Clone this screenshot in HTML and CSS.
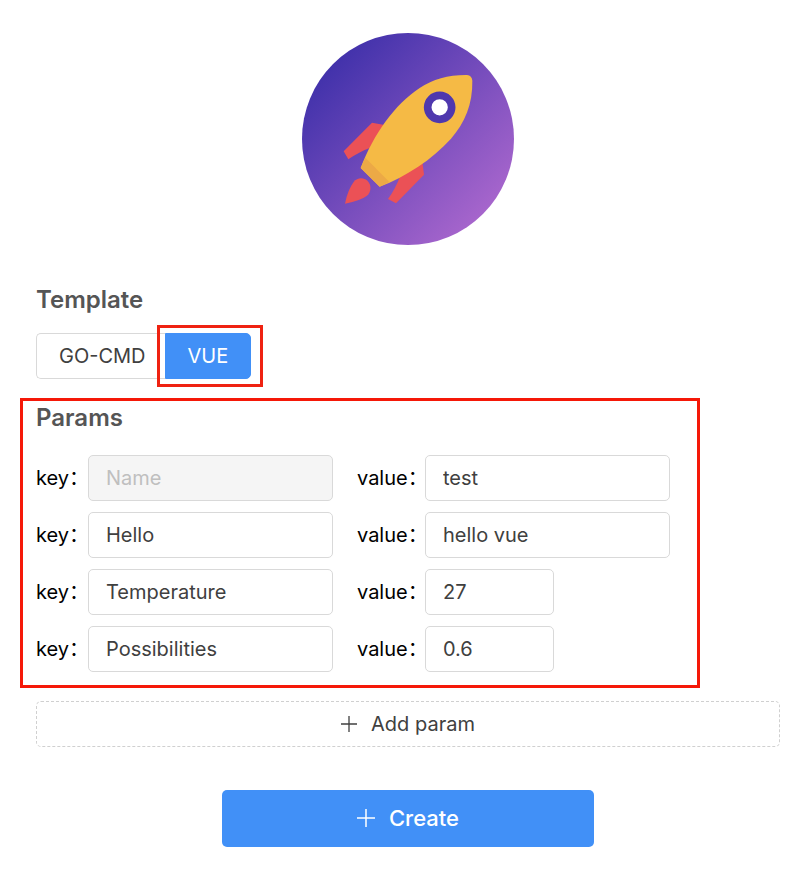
FILE: index.html
```html
<!DOCTYPE html>
<html lang="en">
<head>
<meta charset="utf-8">
<title>Create project</title>
<meta name="viewport" content="width=device-width, initial-scale=1">
<link rel="stylesheet" href="styles.css">
</head>
<body>
<main class="page">
  <svg class="logo" viewBox="23 23 636 636" role="img" aria-label="Rocket">
    <defs>
      <linearGradient id="sky" x1="0.12" y1="0.17" x2="0.84" y2="0.87">
        <stop offset="0" stop-color="#4232ab"/>
        <stop offset="1" stop-color="#a665cc"/>
      </linearGradient>
    </defs>
    <circle cx="341" cy="341" r="318" fill="url(#sky)"/>
    <path fill="#eb5156" d="M233 292L275 300L232 366Q198 378 162 402L148 378Z"/>
    <path fill="#eb5156" d="M384 408L389 448L305 534L281 521Q304 489 318 451Z"/>
    <path fill="#eb5156" d="M152 535Q160 494 178 470C188 457 208 455 220 467C232 480 231 500 218 511Q200 525 152 535Z"/>
    <path fill="#f5ba45" d="M199 428C238 326 302 236 376 188Q436 148 518 149Q533 151 534 166C535 236 512 292 470 340C414 402 335 454 256 484Z"/>
    <path fill="#eca946" d="M199 428L213 397L285 470L256 484Z"/>
    <circle cx="436" cy="246" r="36" fill="#fff" stroke="#4f38ae" stroke-width="23"/>
  </svg>

  <form class="form">
    <fieldset class="template">
      <legend class="heading">Template</legend>
      <div class="segments">
        <label class="segment"><input type="radio" name="template" value="go-cmd"><span>GO-CMD</span></label>
        <label class="segment marked"><input type="radio" name="template" value="vue" checked><span>VUE</span></label>
      </div>
    </fieldset>

    <section class="params">
      <h2 class="heading">Params</h2>
      <div class="rows">
        <div class="row">
          <label for="key1">key：</label><input class="field" id="key1" type="text" placeholder="Name" disabled>
          <label class="second" for="value1">value：</label><input class="field" id="value1" type="text" value="test">
        </div>
        <div class="row">
          <label for="key2">key：</label><input class="field" id="key2" type="text" value="Hello">
          <label class="second" for="value2">value：</label><input class="field" id="value2" type="text" value="hello vue">
        </div>
        <div class="row">
          <label for="key3">key：</label><input class="field" id="key3" type="text" value="Temperature">
          <label class="second" for="value3">value：</label><input class="field short" id="value3" type="text" inputmode="decimal" value="27">
        </div>
        <div class="row">
          <label for="key4">key：</label><input class="field" id="key4" type="text" value="Possibilities">
          <label class="second" for="value4">value：</label><input class="field short" id="value4" type="text" inputmode="decimal" value="0.6">
        </div>
      </div>
    </section>

    <button class="button add" type="button">
      <svg class="plus" viewBox="0 0 16 16" aria-hidden="true"><path d="M8 0V16M0 8H16"/></svg>
      Add param
    </button>
    <button class="button create" type="submit">
      <svg class="plus" viewBox="0 0 18 18" aria-hidden="true"><path d="M9 0V18M0 9H18"/></svg>
      Create
    </button>
  </form>
</main>
</body>
</html>
```

FILE: styles.css
```css
* {
  box-sizing: border-box;
}

body {
  margin: 0;
  background: #fff;
  color: #000;
  font-family: Inter, "Noto Sans CJK SC", sans-serif;
  font-size: 20px;
  line-height: 28px;
}

.page {
  padding: 33px 20px 48px 36px;
}

.logo {
  display: block;
  width: 212px;
  margin: 0 auto 41px;
}

.form {
  display: flex;
  flex-direction: column;
}

.template {
  margin: 0 0 19px;
  padding: 0;
  border: 0;
}

.heading {
  margin: 0;
  padding: 0;
  color: #555;
  font-size: 24px;
  font-weight: 600;
  line-height: 28px;
}

.segments {
  display: flex;
  margin-top: 19px;
}

.segment {
  position: relative;
  display: flex;
  align-items: center;
  justify-content: center;
  height: 46px;
  padding: 0 19px 0 22px;
  border: 1px solid #d9d9d9;
  border-right: 0;
  border-radius: 5px 0 0 5px;
  color: #404040;
}

.segment input {
  position: absolute;
  inset: 0;
  margin: 0;
  opacity: 0;
}

.segment + .segment {
  padding: 0 22px;
  border: 1px solid #4190f7;
  border-radius: 0 5px 5px 0;
}

.segment:has(:checked) {
  background: #4190f7;
  color: #fff;
}

.marked::after {
  content: "";
  position: absolute;
  inset: -9px -13px -9px -9px;
  border: 3px solid #ef2211;
  pointer-events: none;
}

.params {
  max-width: 680px;
  margin-left: -16px;
  padding: 3px 26px 13px 13px;
  border: 3px solid #f51808;
}

.rows {
  display: grid;
  gap: 11px;
  margin-top: 23px;
}

.row {
  display: grid;
  grid-template-columns: 52px minmax(0, 245px) 92px minmax(0, 245px);
  align-items: center;
}

.row label {
  white-space: nowrap;
}

.second {
  padding-left: 24px;
}

.field {
  width: 100%;
  height: 46px;
  padding: 0 17px;
  border: 1px solid #d9d9d9;
  border-radius: 5px;
  background: #fff;
  color: #404040;
  font: inherit;
}

.field:disabled {
  background: #f5f5f5;
}

.field::placeholder {
  color: #bfbfbf;
}

.short {
  width: 129px;
}

.button {
  display: flex;
  align-items: center;
  justify-content: center;
  gap: 14px;
  padding: 0;
  border-radius: 5px;
  font: inherit;
}

.add {
  height: 46px;
  margin-top: 13px;
  border: 1px dashed #d0d0d0;
  background: #fff;
  color: #404040;
}

.create {
  align-self: center;
  width: 50%;
  height: 57px;
  margin-top: 43px;
  padding-bottom: 2px;
  border: 0;
  background: #4190f7;
  color: #fff;
  font-size: 22px;
  font-weight: 500;
}

.plus {
  width: 16px;
  fill: none;
  stroke: currentColor;
  stroke-width: 1.3;
}

.create .plus {
  width: 18px;
  stroke-width: 1.5;
}
```
